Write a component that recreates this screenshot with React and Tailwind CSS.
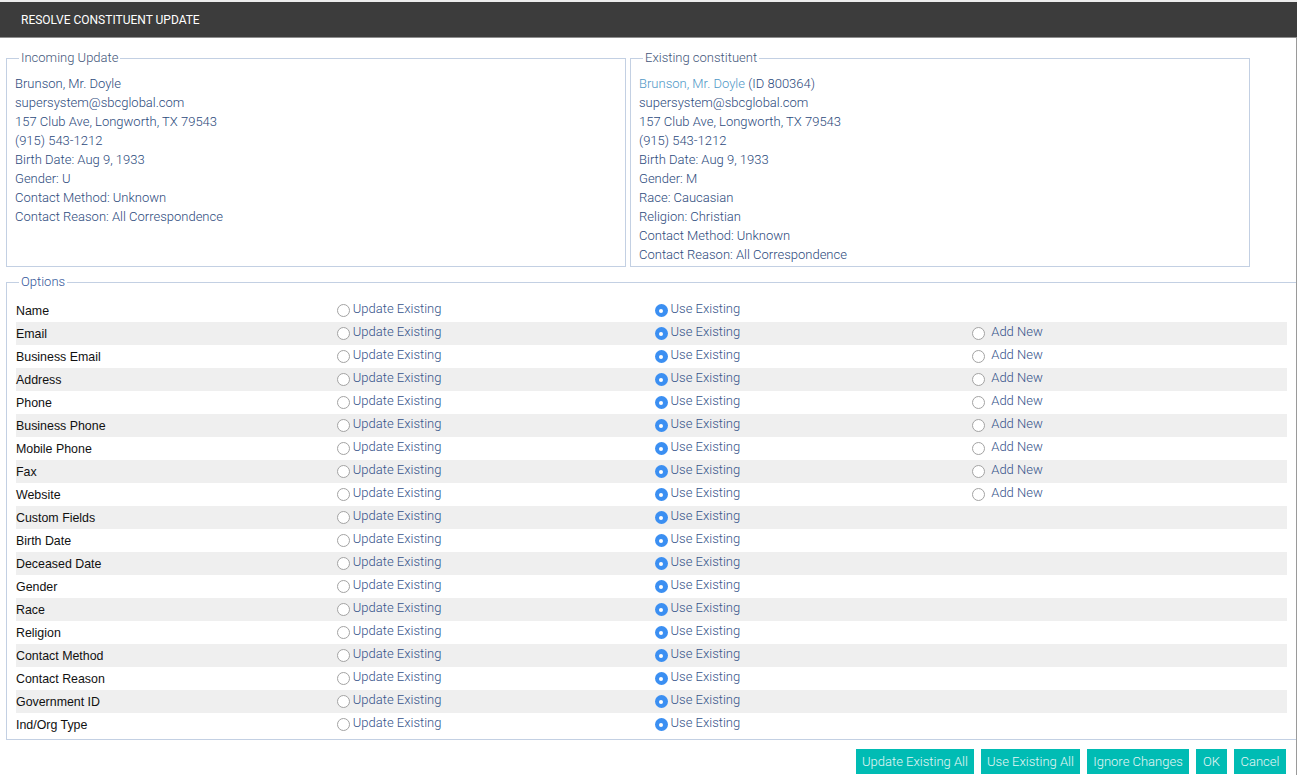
import React from "react";

const rows = [
  ["Name", false],
  ["Email", true],
  ["Business Email", true],
  ["Address", true],
  ["Phone", true],
  ["Business Phone", true],
  ["Mobile Phone", true],
  ["Fax", true],
  ["Website", true],
  ["Custom Fields", false],
  ["Birth Date", false],
  ["Deceased Date", false],
  ["Gender", false],
  ["Race", false],
  ["Religion", false],
  ["Contact Method", false],
  ["Contact Reason", false],
  ["Government ID", false],
  ["Ind/Org Type", false],
];

function Radio({ checked }) {
  if (checked) {
    return (
      <span className="ml-[3px] w-[13px] h-[13px] rounded-full bg-[#3b8ff2] flex items-center justify-center shrink-0">
        <span className="w-[4px] h-[4px] rounded-full bg-white" />
      </span>
    );
  }
  return (
    <span className="ml-[3px] w-[13px] h-[13px] rounded-full border border-[#a3a3a3] bg-white shrink-0" />
  );
}

function Opt({ checked, label, gap }) {
  return (
    <div className="flex items-center h-full">
      <Radio checked={checked} />
      <span className={`${gap ? "ml-[6px]" : "ml-[3px]"} pb-[4px] text-[#34538a] text-[13px] leading-[15px] font-light`}>
        {label}
      </span>
    </div>
  );
}

const infoLeft = [
  "Brunson, Mr. Doyle",
  "supersystem@sbcglobal.com",
  "157 Club Ave, Longworth, TX 79543",
  "(915) 543-1212",
  "Birth Date: Aug 9, 1933",
  "Gender: U",
  "Contact Method: Unknown",
  "Contact Reason: All Correspondence",
];

const infoRight = [
  "supersystem@sbcglobal.com",
  "157 Club Ave, Longworth, TX 79543",
  "(915) 543-1212",
  "Birth Date: Aug 9, 1933",
  "Gender: M",
  "Race: Caucasian",
  "Religion: Christian",
  "Contact Method: Unknown",
  "Contact Reason: All Correspondence",
];

const buttons = [
  ["Update Existing All", "w-[118px]"],
  ["Use Existing All", "w-[99px]"],
  ["Ignore Changes", "w-[102px]"],
  ["OK", "w-[31px]"],
  ["Cancel", "w-[52px]"],
];

export default function App() {
  return (
    <div className="w-[1297px] h-[775px] bg-white overflow-hidden font-['Roboto',sans-serif]">
      <div className="h-[2px] bg-[#ececec]" />
      <div className="h-[36px] bg-[#3c3c3c] border-b border-[#8e8e8e] flex items-center pl-[21px]">
        <span className="text-white text-[12px] leading-[14px]">RESOLVE CONSTITUENT UPDATE</span>
      </div>
      <div className="h-[737px] border-r border-[#9a9a9a] overflow-hidden pl-[6px] pt-[12px]">
        <div className="flex gap-[4px]">
          <fieldset className="w-[620px] h-[217px] border border-[#c3d0e3] px-[8px]">
            <legend className="ml-[4px] px-[2px] text-[13px] leading-[16px] text-[#43567a] font-light">Incoming Update</legend>
            <div className="pt-[8px] text-[13px] leading-[19px] text-[#2c4a7c] font-light">
              {infoLeft.map((t) => (
                <div key={t}>{t}</div>
              ))}
            </div>
          </fieldset>
          <fieldset className="w-[620px] h-[217px] border border-[#c3d0e3] px-[8px]">
            <legend className="ml-[4px] px-[2px] text-[13px] leading-[16px] text-[#43567a] font-light">Existing constituent</legend>
            <div className="pt-[8px] text-[13px] leading-[19px] text-[#2c4a7c] font-light">
              <div>
                <span className="text-[#4f97c6]">Brunson, Mr. Doyle</span> (ID 800364)
              </div>
              {infoRight.map((t) => (
                <div key={t}>{t}</div>
              ))}
            </div>
          </fieldset>
        </div>
        <fieldset className="mt-[7px] w-[1291px] h-[466px] border border-[#c3d0e3] pl-[9px]">
          <legend className="ml-[3px] px-[2px] text-[13px] leading-[16px] text-[#33579a] font-light">Options</legend>
          <div className="mt-[9px] w-[1271px]">
            {rows.map(([label, addNew], i) => (
              <div
                key={label}
                className={`grid grid-cols-4 h-[23px] ${i % 2 === 1 ? "bg-[#efefef]" : ""}`}
              >
                <div className="flex items-center">
                  <span className="font-['Liberation_Sans',Arial,sans-serif] text-[12.4px] text-[#111] pt-[1px]">{label}</span>
                </div>
                <Opt checked={false} label="Update Existing" />
                <Opt checked={true} label="Use Existing" />
                {addNew ? <Opt checked={false} label="Add New" gap /> : <div />}
              </div>
            ))}
          </div>
        </fieldset>
        <div className="flex justify-end gap-[7px] pr-[10px] mt-[9px]">
          {buttons.map(([t, w]) => (
            <div
              key={t}
              className={`${w} h-[25px] bg-[#00bcb4] text-[#e4f6f5] text-[13px] font-light flex items-center justify-center`}
            >
              {t}
            </div>
          ))}
        </div>
      </div>
    </div>
  );
}
